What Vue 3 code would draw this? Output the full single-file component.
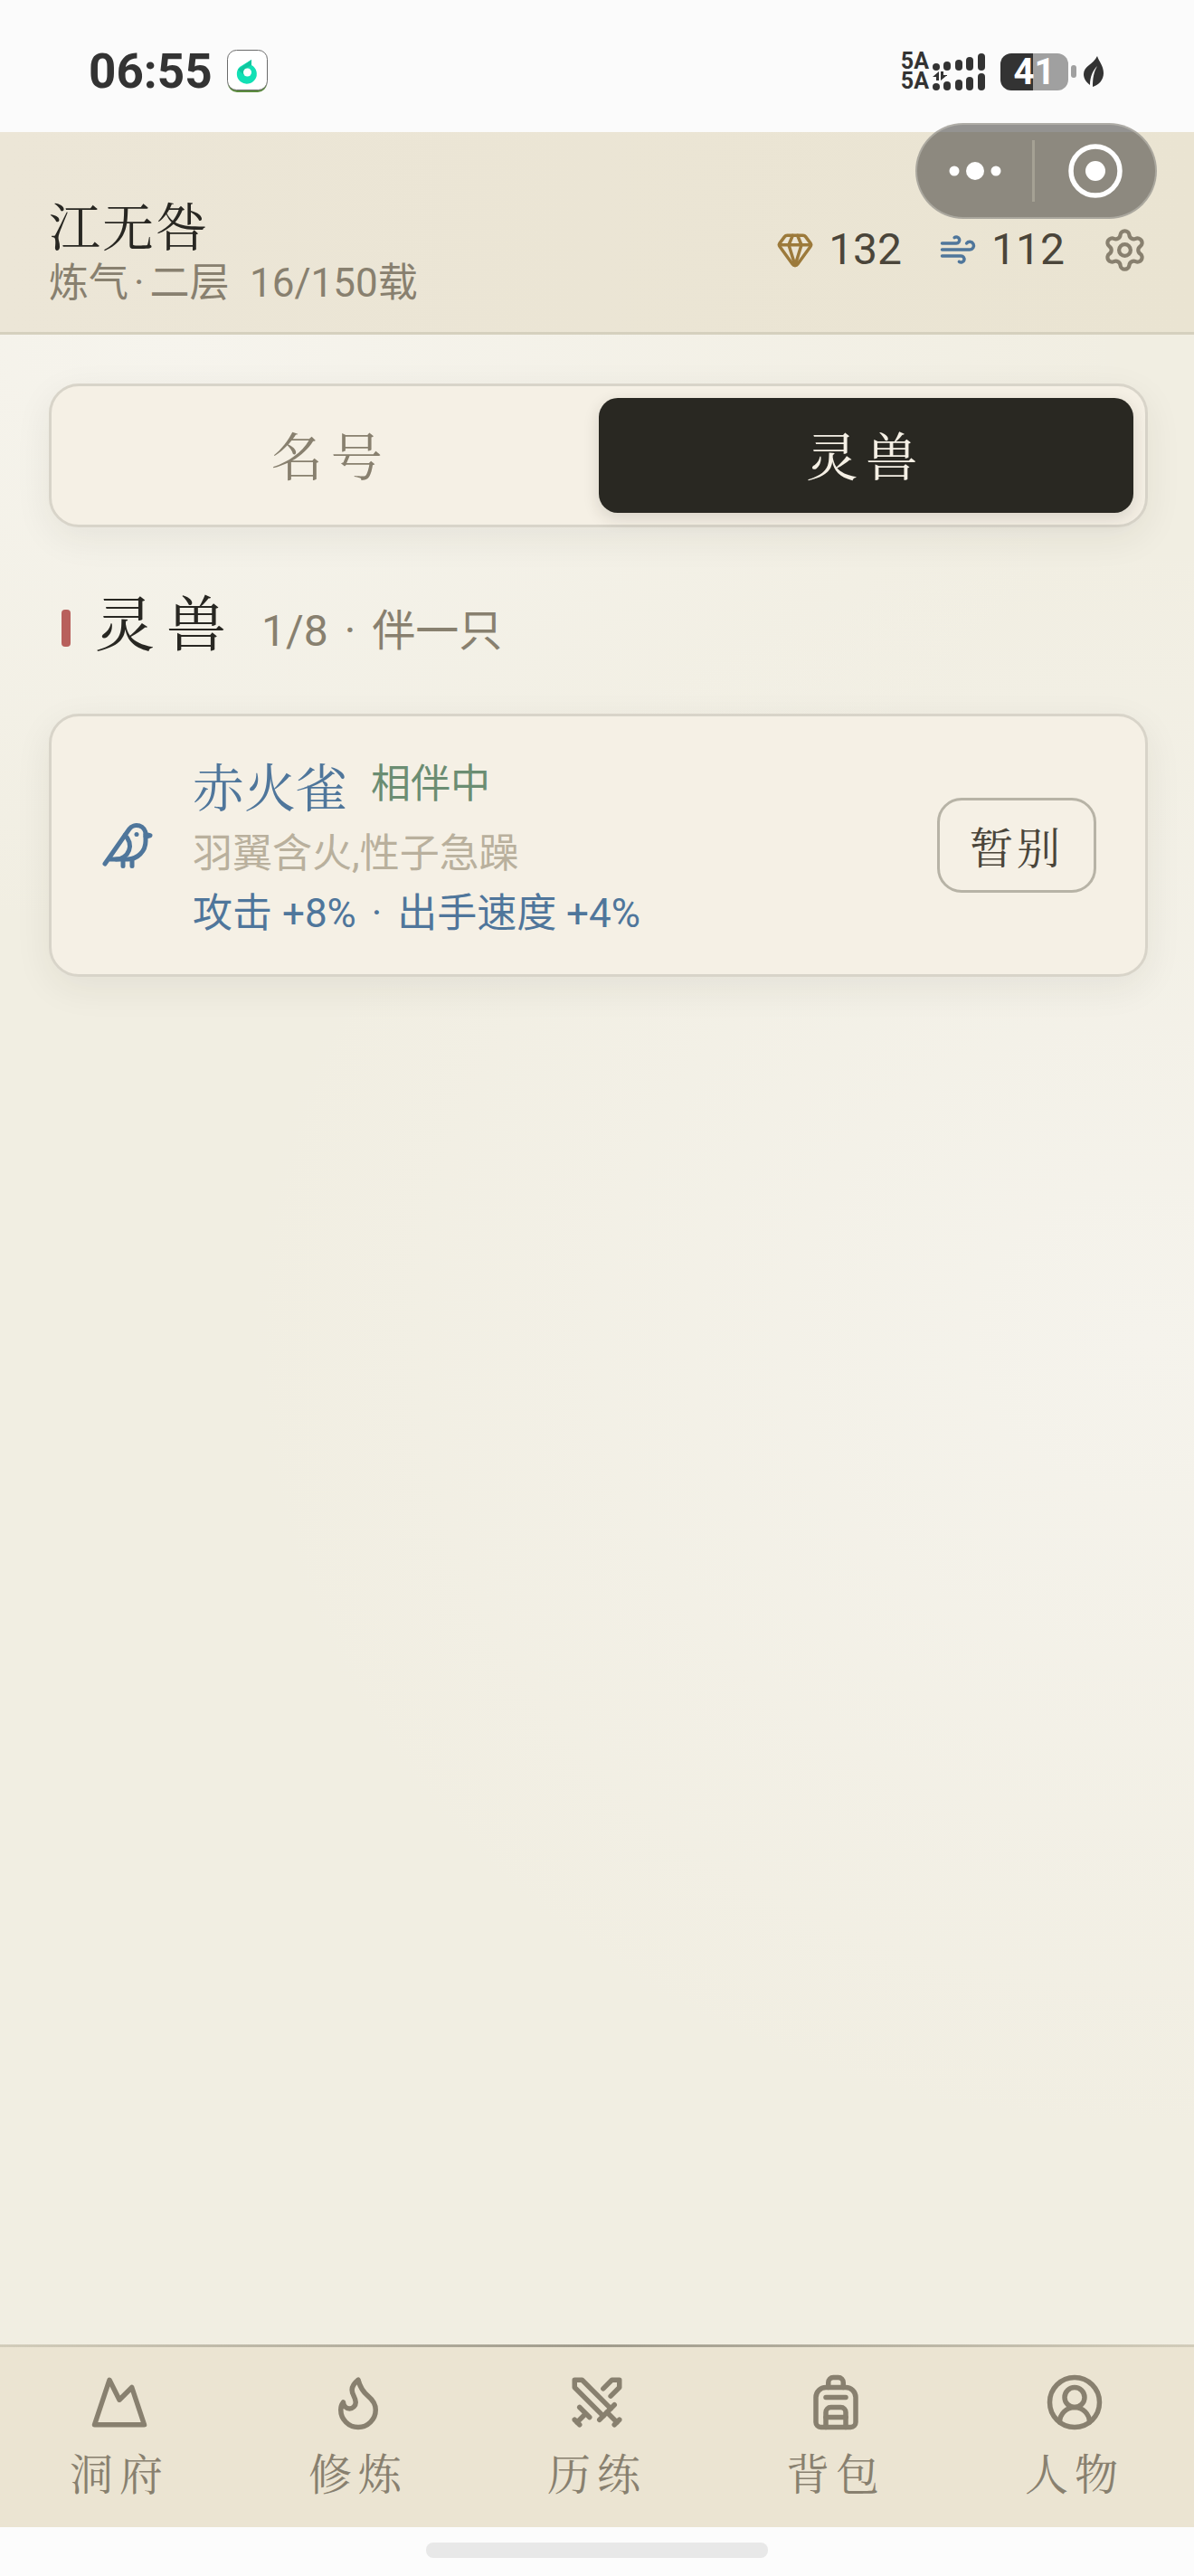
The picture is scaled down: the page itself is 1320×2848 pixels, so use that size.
<script setup>
import { ref } from 'vue'

const tab = ref('beast')
const tabs = [
  { id: 'title', label: '名号' },
  { id: 'beast', label: '灵兽' },
]

const nav = [
  { label: '洞府', paths: ['m8 3 4 8 5-5 5 15H2L8 3z'] },
  {
    label: '修炼',
    paths: ['M12 3q1 4 4 6.5t3 5.5a1 1 0 0 1-14 0 5 5 0 0 1 1-3 1 1 0 0 0 5 0c0-2-1.5-3-1.5-5q0-2 2.5-4'],
  },
  {
    label: '历练',
    paths: [
      'M14.5 17.5 3 6V3h3l11.5 11.5',
      'M13 19l6-6',
      'M16 16l4 4',
      'M19 21l2-2',
      'M14.5 6.5 18 3h3v3l-3.5 3.5',
      'M5 14l4 4',
      'M7 17l-3 3',
      'M3 19l2 2',
    ],
  },
  {
    label: '背包',
    paths: [
      'M4 10a4 4 0 0 1 4-4h8a4 4 0 0 1 4 4v10a2 2 0 0 1-2 2H6a2 2 0 0 1-2-2z',
      'M8 10h8',
      'M8 18h8',
      'M8 22v-6a2 2 0 0 1 2-2h4a2 2 0 0 1 2 2v6',
      'M9 6V4a2 2 0 0 1 2-2h2a2 2 0 0 1 2 2v2',
    ],
  },
  {
    label: '人物',
    paths: [
      'M18 20a6 6 0 0 0-12 0',
      'M8 10a4 4 0 1 0 8 0a4 4 0 1 0-8 0',
      'M2 12a10 10 0 1 0 20 0a10 10 0 1 0-20 0',
    ],
  },
]
</script>

<template>
  <div class="app">
    <div class="status">
      <span class="clock">06:55</span>
      <svg class="app-badge" viewBox="0 0 45 48" aria-hidden="true">
        <rect x="1" y="3" width="43" height="44" rx="10" fill="#5b8c3e" />
        <rect x="0.5" y="0.5" width="44" height="44" rx="10" fill="#fff" stroke="#6b6b6b" />
        <path d="M27 11v6a11 11 0 1 1-13 2z" fill="#12e0b5" />
        <path d="M12 22l7 6 3-8 5-3v-6z" fill="#0fc79f" />
        <circle cx="22.5" cy="25" r="4.5" fill="#fff" />
      </svg>
      <div class="status-right">
        <div class="carriers"><span>5A</span><span>5A</span></div>
        <svg class="signal" viewBox="0 0 58 41" aria-hidden="true" fill="#333">
          <rect x="0" y="11" width="8" height="8" rx="4" />
          <rect x="12" y="9" width="8" height="10" rx="4" />
          <rect x="25" y="7" width="8" height="12" rx="4" />
          <rect x="37" y="4" width="8" height="15" rx="4" />
          <rect x="50" y="0" width="8" height="19" rx="4" />
          <rect x="0" y="33" width="8" height="8" rx="4" />
          <rect x="12" y="31" width="8" height="10" rx="4" />
          <rect x="25" y="29" width="8" height="12" rx="4" />
          <rect x="37" y="26" width="8" height="15" rx="4" />
          <rect x="50" y="22" width="8" height="19" rx="4" />
          <path d="M7 20v10H4v-4H0zM9 20v10l6-5h1v-1h-4v-4z" />
        </svg>
        <div class="battery"><span>41</span></div>
        <i class="battery-tip"></i>
        <svg class="leaf" viewBox="0 0 22 34" aria-hidden="true">
          <path d="M15 0c2 6 7 11 7 19 0 7-5 13-12 15 0-9 1-16 5-23-5 5-8 12-8 21-4-3-7-7-7-12C0 11 11 9 15 0z" fill="#333" />
        </svg>
      </div>
    </div>

    <header class="header">
      <div class="who">
        <h1>江无咎</h1>
        <p>炼气<span class="dot">·</span>二层&ensp;16/150载</p>
      </div>
      <div class="purse">
        <svg class="icon gem" viewBox="0 0 24 24" aria-hidden="true">
          <path d="M10.5 3 8 9l4 13 4-13-2.5-6" />
          <path d="M17 3a2 2 0 0 1 1.6.8l3 4a2 2 0 0 1 .013 2.382l-7.99 10.986a2 2 0 0 1-3.247 0l-7.99-10.986A2 2 0 0 1 2.4 7.8l2.998-3.997A2 2 0 0 1 7 3z" />
          <path d="M2 9h20" />
        </svg>
        <span class="amount">132</span>
        <svg class="icon wind" viewBox="0 0 24 24" aria-hidden="true">
          <path d="M12.8 19.6A2 2 0 1 0 14 16H2" />
          <path d="M17.5 8a2.5 2.5 0 1 1 2 4H2" />
          <path d="M9.8 4.4A2 2 0 1 1 11 8H2" />
        </svg>
        <span class="amount">112</span>
        <button class="settings" type="button" aria-label="设置">
          <svg class="icon gear" viewBox="0 0 24 24" aria-hidden="true">
            <path d="M9.671 4.136a2.34 2.34 0 0 1 4.659 0 2.34 2.34 0 0 0 3.319 1.915 2.34 2.34 0 0 1 2.33 4.033 2.34 2.34 0 0 0 0 3.831 2.34 2.34 0 0 1-2.33 4.033 2.34 2.34 0 0 0-3.319 1.915 2.34 2.34 0 0 1-4.659 0 2.34 2.34 0 0 0-3.32-1.915 2.34 2.34 0 0 1-2.33-4.033 2.34 2.34 0 0 0 0-3.831A2.34 2.34 0 0 1 6.35 6.051a2.34 2.34 0 0 0 3.319-1.915" />
            <circle cx="12" cy="12" r="3" />
          </svg>
        </button>
      </div>
      <div class="capsule">
        <button class="more" type="button" aria-label="更多">
          <svg width="58" height="60" viewBox="0 0 58 60" aria-hidden="true" fill="#fff">
            <circle cx="6" cy="30" r="5.5" />
            <circle cx="29" cy="30" r="10" />
            <circle cx="52" cy="30" r="5.5" />
          </svg>
        </button>
        <i></i>
        <button class="close" type="button" aria-label="关闭">
          <svg width="60" height="60" viewBox="0 0 60 60" aria-hidden="true">
            <circle cx="30" cy="30" r="27" fill="none" stroke="#fff" stroke-width="5.5" />
            <circle cx="30" cy="30" r="11" fill="#fff" />
          </svg>
        </button>
      </div>
    </header>

    <main class="main">
      <div class="tabs" role="tablist">
        <button
          v-for="t in tabs"
          :key="t.id"
          type="button"
          role="tab"
          :aria-selected="tab === t.id"
          :class="{ active: tab === t.id }"
          @click="tab = t.id"
        >
          {{ t.label }}
        </button>
      </div>

      <div class="section-head">
        <i></i>
        <h2>灵兽</h2>
        <span class="meta">1/8 <span class="dot">·</span> 伴一只</span>
      </div>

      <article class="card">
        <svg class="icon bird" viewBox="0 0 24 24" aria-hidden="true">
          <path d="M16 7h.01" />
          <path d="M3.4 18H12a8 8 0 0 0 8-8V7a4 4 0 0 0-7.28-2.3L2 20" />
          <path d="m20 7 2 .5-2 .5" />
          <path d="M10 18v3" />
          <path d="M14 17.75V21" />
          <path d="M7 18a6 6 0 0 0 3.84-10.61" />
        </svg>
        <div class="info">
          <div class="title-row">
            <h3>赤火雀</h3>
            <span>相伴中</span>
          </div>
          <p class="desc">羽翼含火,性子急躁</p>
          <p class="bonus">攻击 +8% <span class="dot">·</span> 出手速度 +4%</p>
        </div>
        <button class="leave" type="button">暂别</button>
      </article>
    </main>

    <nav class="nav">
      <a v-for="n in nav" :key="n.label" href="#">
        <svg class="icon" viewBox="0 0 24 24" aria-hidden="true">
          <path v-for="d in n.paths" :key="d" :d="d" />
        </svg>
        <span>{{ n.label }}</span>
      </a>
    </nav>
    <div class="home-bar"><i></i></div>
  </div>
</template>

<style>
body {
  margin: 0;
}
</style>

<style scoped>
.app {
  --sans: Roboto, "Noto Sans CJK SC", sans-serif;
  --song: "Noto Serif CJK SC", "Source Han Serif SC", "Songti SC", "Noto Sans CJK SC", serif;
  --ink: #282722;
  --muted: #88806f;
  --blue: #4f769b;
  --paper: #f5f0e5;
  display: flex;
  flex-direction: column;
  min-height: 100vh;
  font-family: var(--sans);
  color: var(--ink);
}

h1,
h2,
h3,
p {
  margin: 0;
  font-weight: 400;
}

button {
  margin: 0;
  padding: 0;
  border: 0;
  background: none;
  color: inherit;
  cursor: pointer;
}

.icon {
  display: block;
  flex: none;
  fill: none;
  stroke: currentColor;
  stroke-width: 2;
  stroke-linecap: round;
  stroke-linejoin: round;
}

.dot {
  margin: 0 6px;
}

/* system status bar */
.status {
  display: flex;
  align-items: center;
  height: 146px;
  padding: 12px 100px 0 98px;
  box-sizing: border-box;
  background: #fbfbfb;
  color: #333;
}

.clock {
  font-size: 53px;
  line-height: 60px;
  font-weight: 700;
}

.app-badge {
  width: 45px;
  height: 48px;
  margin-left: 16px;
}

.status-right {
  display: flex;
  align-items: center;
  margin-left: auto;
}

.carriers {
  display: flex;
  flex-direction: column;
  font-size: 25px;
  line-height: 22px;
  font-weight: 700;
}

.signal {
  width: 58px;
  height: 41px;
  margin-left: 4px;
}

.battery {
  width: 75px;
  margin-left: 17px;
  border-radius: 12px;
  background: linear-gradient(90deg, #333 48%, #a0a0a0 48%);
  color: #fff;
  font-size: 40px;
  line-height: 41px;
  font-weight: 700;
  text-align: center;
}

.battery-tip {
  width: 6px;
  height: 14px;
  margin-left: 3px;
  border-radius: 3px;
  background: #a0a0a0;
}

.leaf {
  width: 22px;
  height: 34px;
  margin-left: 8px;
}

/* player header */
.header {
  position: relative;
  display: flex;
  justify-content: space-between;
  align-items: flex-start;
  padding: 71px 51px 26px 54px;
  border-bottom: 3px solid #d5d0be;
  background: linear-gradient(90deg, #ece6d7, #eae4d2);
}

.who h1 {
  font-family: var(--song);
  font-size: 57px;
  line-height: 60px;
  letter-spacing: 2px;
}

.who p {
  margin-top: 8px;
  font-size: 44px;
  line-height: 56px;
  color: var(--muted);
}

.purse {
  display: flex;
  align-items: center;
  height: 118px;
}

.gem,
.wind {
  width: 42px;
  height: 42px;
}

.gem {
  color: #9c7a3b;
}

.wind {
  color: var(--blue);
}

.amount {
  margin: 0 41px 0 16px;
  font-size: 48px;
  line-height: 60px;
  color: #4a453a;
}

.settings {
  color: var(--muted);
}

.gear {
  width: 51px;
  height: 51px;
}

.capsule {
  position: absolute;
  top: -10px;
  right: 41px;
  display: flex;
  align-items: center;
  width: 267px;
  height: 106px;
  box-sizing: border-box;
  border: 2px solid rgba(190, 188, 180, 0.6);
  border-radius: 53px;
  background: rgba(64, 62, 58, 0.55);
}

.capsule button {
  display: flex;
  justify-content: center;
}

.capsule .more {
  width: 127px;
}

.capsule .close {
  flex: 1;
}

.capsule i {
  width: 3px;
  height: 68px;
  background: #a5a194;
}

/* page content */
.main {
  flex: 1;
  padding: 54px 51px 54px 54px;
  background:
    radial-gradient(ellipse 76% 40% at 96% 50%, #f5f3ec, rgba(245, 243, 236, 0)),
    radial-gradient(ellipse 80% 30% at 15% 0%, #f6f4ed, rgba(246, 244, 237, 0)),
    #f1eee2;
}

.tabs {
  display: flex;
  padding: 13px;
  border: 3px solid #d8d4c9;
  border-radius: 33px;
  background: var(--paper);
  box-shadow: 0 12px 42px rgba(40, 38, 30, 0.07);
}

.tabs button {
  flex: 1;
  height: 127px;
  padding-bottom: 6px;
  border-radius: 21px;
  font-family: var(--song);
  font-size: 57px;
  letter-spacing: 9px;
  color: var(--muted);
}

.tabs .active {
  background: #292822;
  color: var(--paper);
  box-shadow: 0 6px 18px rgba(40, 38, 30, 0.14);
}

.section-head {
  display: flex;
  align-items: baseline;
  margin: 66px 0 50px 14px;
}

.section-head i {
  align-self: center;
  width: 10px;
  height: 41px;
  border-radius: 4px;
  background: #b8605c;
}

.section-head h2 {
  margin-left: 27px;
  padding-bottom: 16px;
  font-family: var(--song);
  font-size: 66px;
  line-height: 74px;
  letter-spacing: 13px;
}

.section-head .meta {
  margin-left: 26px;
  font-size: 48px;
  line-height: 60px;
  color: var(--muted);
}

.card {
  display: flex;
  align-items: center;
  padding: 33px 54px;
  border: 3px solid #d8d4c9;
  border-radius: 33px;
  background: var(--paper);
  box-shadow: 0 12px 42px rgba(40, 38, 30, 0.07);
}

.bird {
  width: 60px;
  height: 60px;
  color: var(--blue);
}

.info {
  flex: 1;
  margin-left: 42px;
  padding: 3px 0 1px;
}

.title-row {
  display: flex;
  align-items: center;
}

.title-row h3 {
  font-family: var(--song);
  font-size: 57px;
  line-height: 78px;
  color: var(--blue);
}

.title-row span {
  margin-left: 26px;
  font-size: 44px;
  line-height: 66px;
  color: #6b8d72;
}

.desc,
.bonus {
  font-size: 44px;
  line-height: 66px;
}

.desc {
  margin-top: 5px;
  color: #b9b09d;
}

.bonus {
  color: var(--blue);
}

.leave {
  height: 105px;
  padding: 0 33px;
  border: 3px solid #b7b3a6;
  border-radius: 27px;
  font-family: var(--song);
  font-size: 48px;
  letter-spacing: 4px;
  color: #4a453a;
}

/* bottom navigation */
.nav {
  display: flex;
  border-top: 3px solid;
  border-image: linear-gradient(90deg, #d2ccba, #a09b8c 50%, #d2ccba) 1;
  background: #ebe4d2;
}

.nav a {
  display: flex;
  flex: 1;
  flex-direction: column;
  align-items: center;
  padding: 28px 0 31px;
  color: var(--muted);
  text-decoration: none;
}

.nav .icon {
  width: 66px;
  height: 66px;
}

.nav span {
  margin-top: 14px;
  font-family: var(--song);
  font-size: 48px;
  line-height: 60px;
  letter-spacing: 7px;
}

.home-bar {
  display: flex;
  justify-content: center;
  padding: 17px 0 20px;
  background: #fcfcfc;
}

.home-bar i {
  width: 378px;
  height: 17px;
  border-radius: 8px;
  background: #e8e8e8;
}
</style>
